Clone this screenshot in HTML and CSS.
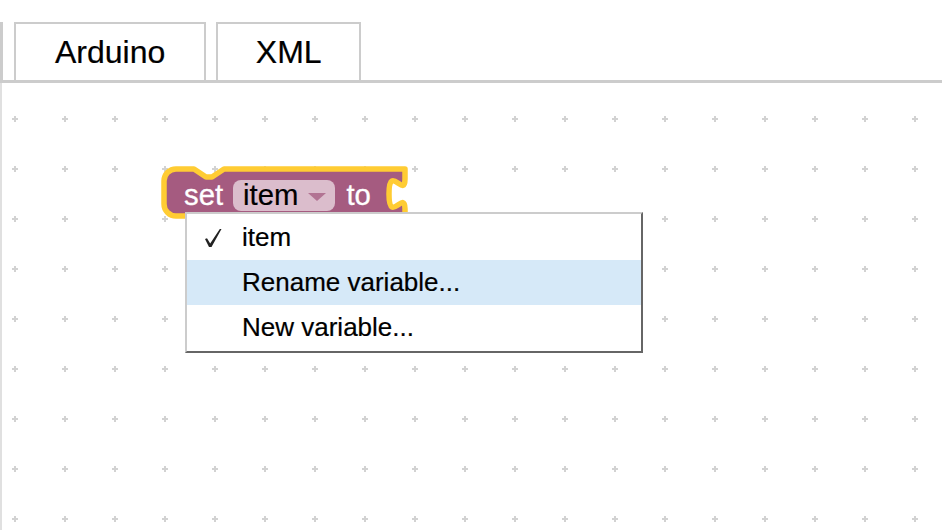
FILE: index.html
```html
<!DOCTYPE html>
<html>
<head>
<meta charset="utf-8">
<title>Blockly workspace</title>
<link rel="stylesheet" href="styles.css">
</head>
<body>
<div class="tabbar">
  <div class="tab-cut"></div>
  <div class="tab tab-arduino">Arduino</div>
  <div class="tab tab-xml">XML</div>
</div>
<div class="workspace">
  <svg class="grid" width="100%" height="100%">
    <defs>
      <pattern id="gridpat" x="-12" y="11" width="50" height="50" patternUnits="userSpaceOnUse">
        <rect x="22" y="24" width="6" height="2" fill="#d2d2d2"/>
        <rect x="24" y="22" width="2" height="6" fill="#d2d2d2"/>
      </pattern>
    </defs>
    <rect width="100%" height="100%" fill="url(#gridpat)"/>
  </svg>

  <div class="block">
    <svg class="block-shape" width="256" height="70" viewBox="0 0 256 70">
      <path d="M5,21 A12,12 0 0,1 17,9 H35 l12,8 6,0 12,-8 H246 v10 c0,20 -16,-16 -16,15 s16,-5 16,15 V56 H65 l-12,8 -6,0 -12,-8 H17 A12,12 0 0,1 5,44 Z" fill="#a55b80" stroke="#fc3" stroke-width="5.5" stroke-linejoin="round"/>
    </svg>
    <div class="block-row">
      <span class="block-label">set</span>
      <span class="field">
        <span class="field-text">item</span>
        <svg class="arrow" width="18" height="8" viewBox="0 0 18 8"><path d="M0,0 H18 L9,8 Z"/></svg>
      </span>
      <span class="block-label block-to">to</span>
    </div>
  </div>

  <div class="menu">
    <div class="menu-item">
      <span class="check"><svg width="20" height="20" viewBox="0 0 20 20"><path d="M2,11 L6,19 L8.5,19 L18.5,1 L16.8,1 L7.2,15.5 L4,10.3 Z"/></svg></span>
      <span>item</span>
    </div>
    <div class="menu-item menu-item-highlight">
      <span class="check"></span>
      <span>Rename variable...</span>
    </div>
    <div class="menu-item">
      <span class="check"></span>
      <span>New variable...</span>
    </div>
  </div>
</div>
</body>
</html>
```
FILE: styles.css
```css
html, body {
  margin: 0;
  padding: 0;
  background: #fff;
  font-family: "Liberation Sans", Arial, sans-serif;
  overflow: hidden;
}

.tabbar {
  display: flex;
  align-items: flex-end;
  gap: 10px;
  height: 80px;
  border-bottom: 3px solid #ccc;
}

.tab-cut {
  width: 3px;
  height: 58px;
  margin-right: 1px;
  background: #ccc;
}

.tab {
  height: 56px;
  border: 2px solid #ccc;
  border-bottom: none;
  line-height: 56px;
  font-size: 32px;
  color: #000;
  -webkit-text-stroke: 0.2px #000;
}

.tab-arduino {
  padding: 0 39px;
}

.tab-xml {
  padding: 0 37.5px;
}

.workspace {
  position: relative;
  height: 447px;
  border-left: 2px solid #e0e0e0;
  overflow: hidden;
}

.grid {
  display: block;
}

.block {
  position: absolute;
  left: 157px;
  top: 77px;
  width: 256px;
  height: 70px;
}

.block-shape {
  position: absolute;
  left: 0;
  top: 0;
}

.block-row {
  position: relative;
  display: flex;
  align-items: center;
  padding-left: 25px;
  margin-top: 20px;
  height: 31px;
  font-size: 29.3px;
}

.block-label {
  color: #fff;
  line-height: 31px;
  padding-bottom: 2px;
  -webkit-text-stroke: 0.3px #fff;
}

.field {
  display: flex;
  align-items: center;
  height: 31px;
  margin-left: 10px;
  padding: 0 9px 0 10px;
  border-radius: 8px;
  background: #dbbdcc;
}

.field-text {
  color: #000;
  line-height: 31px;
  padding-bottom: 2px;
  -webkit-text-stroke: 0.2px #000;
}

.arrow {
  margin-left: 10px;
  margin-top: 3px;
  fill: #b27493;
}

.block-to {
  margin-left: 11px;
}

.menu {
  position: absolute;
  left: 183px;
  top: 129px;
  width: 454px;
  padding: 1px 0 1px;
  border-style: solid;
  border-width: 2px;
  border-color: #ccc #666 #666 #ccc;
  background: #fff;
  font-size: 26px;
  color: #000;
  -webkit-text-stroke: 0.2px #000;
}

.menu-item {
  display: flex;
  align-items: center;
  height: 45px;
}

.menu-item-highlight {
  background: #d6e9f8;
}

.check {
  display: flex;
  align-items: center;
  width: 55px;
  height: 20px;
}

.check svg {
  margin-left: 16px;
  fill: #222;
}
```
